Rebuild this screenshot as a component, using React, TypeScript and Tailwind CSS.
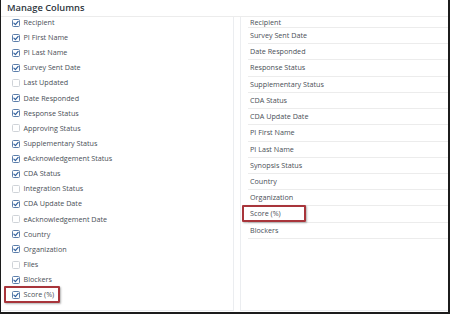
import React from 'react';

const leftItems: [string, boolean][] = [
  ['Recipient', true],
  ['PI First Name', true],
  ['PI Last Name', true],
  ['Survey Sent Date', true],
  ['Last Updated', false],
  ['Date Responded', true],
  ['Response Status', true],
  ['Approving Status', false],
  ['Supplementary Status', true],
  ['eAcknowledgement Status', true],
  ['CDA Status', true],
  ['Integration Status', false],
  ['CDA Update Date', true],
  ['eAcknowledgement Date', false],
  ['Country', true],
  ['Organization', true],
  ['Files', false],
  ['Blockers', true],
  ['Score (%)', true],
];

const rightItems = [
  'Recipient',
  'Survey Sent Date',
  'Date Responded',
  'Response Status',
  'Supplementary Status',
  'CDA Status',
  'CDA Update Date',
  'PI First Name',
  'PI Last Name',
  'Synopsis Status',
  'Country',
  'Organization',
  'Score (%)',
  'Blockers',
];

function Check({ on }: { on: boolean }) {
  if (!on) {
    return <span className="w-[8px] h-[8px] rounded-[1.5px] border border-[#cfd3d8] bg-white shrink-0" />;
  }
  return (
    <span className="w-[8px] h-[8px] rounded-[1.5px] border border-[#5d7fab] bg-white shrink-0 flex items-center justify-center">
      <svg width="6" height="6" viewBox="0 0 10 10">
        <path d="M1.5 5.2 L4 7.6 L8.6 2.4" fill="none" stroke="#2f5f9e" strokeWidth="2" strokeLinecap="round" strokeLinejoin="round" />
      </svg>
    </span>
  );
}

export default function App() {
  return (
    <div
      className="w-[450px] h-[314px] bg-white border-l border-r-2 border-b-2 border-[#1c1c1c] flex flex-col overflow-hidden"
      style={{ fontFamily: '"Open Sans", sans-serif' }}
    >
      {/* header */}
      <div className="h-[17px] shrink-0 border-b border-[#ececec] px-[6px] flex items-center relative z-10 bg-white">
        <span className="text-[9.3px] font-semibold text-[#2e3640] leading-none -mt-[1px]">Manage Columns</span>
      </div>

      <div className="flex-1 flex gap-[6px] pb-[1px] min-h-0">
        {/* available columns */}
        <div className="w-[233px] border-r border-b border-[#ebedf0] overflow-hidden">
          <div className="-mt-[2px]">
            {leftItems.map(([label, on]) => (
              <div key={label} className="h-[15.14px] pl-[11px] flex items-center gap-[3.5px] relative">
                <Check on={on} />
                <span className="text-[7.2px] text-[#4a4f57] leading-none">{label}</span>
                {label === 'Score (%)' && (
                  <span className="absolute left-[3px] top-[-1px] w-[56px] h-[17px] border-2 border-[#a8353b] rounded-[1px] shadow-[1px_1px_2px_rgba(0,0,0,0.3)]" />
                )}
              </div>
            ))}
          </div>
        </div>

        {/* selected columns */}
        <div className="flex-1 border-l border-b border-[#ebedf0] overflow-hidden pl-[7px]">
          {rightItems.map((label, i) => (
            <div
              key={label}
              className={`${i === 0 ? 'h-[11px] pt-[1px]' : 'h-[16.23px]'} border-b border-[#ececec] pl-[2px] flex items-center relative`}
            >
              <span className="text-[7.2px] text-[#4a4f57] leading-none">{label}</span>
              {label === 'Score (%)' && (
                <span className="absolute left-[-6px] top-[-1px] w-[64px] h-[17px] border-2 border-[#a8353b] rounded-[1px] shadow-[1px_1px_2px_rgba(0,0,0,0.3)]" />
              )}
            </div>
          ))}
        </div>
      </div>
    </div>
  );
}
